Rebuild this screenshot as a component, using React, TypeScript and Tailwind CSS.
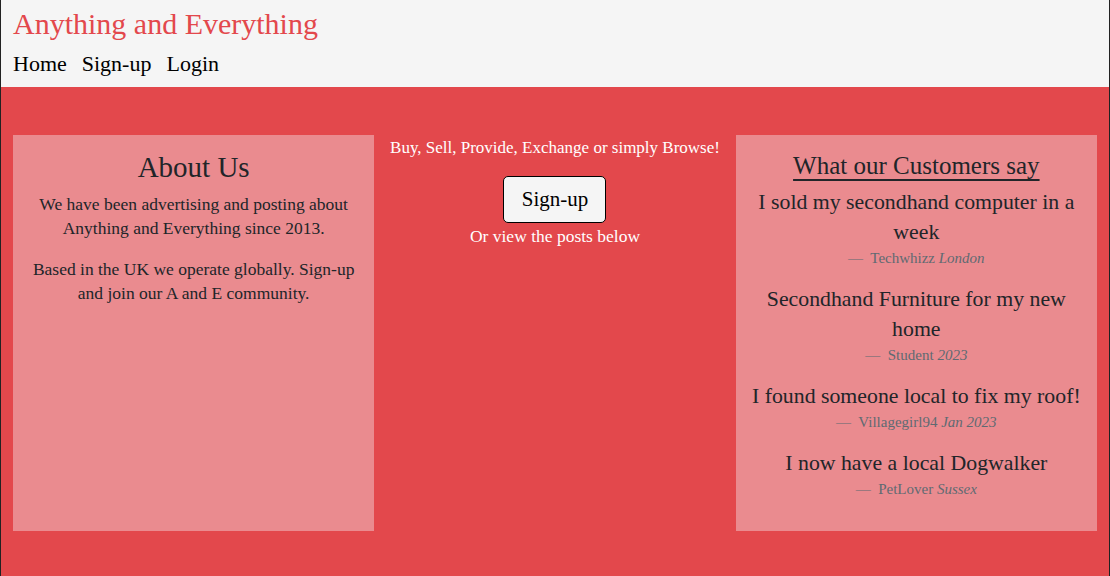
const quotes = [
  { text: "I sold my secondhand computer in a week", who: "Techwhizz", where: "London" },
  { text: "Secondhand Furniture for my new home", who: "Student", where: "2023" },
  { text: "I found someone local to fix my roof!", who: "Villagegirl94", where: "Jan 2023" },
  { text: "I now have a local Dogwalker", who: "PetLover", where: "Sussex" },
];

export default function App() {
  return (
    <div
      className="min-h-[576px] border-x border-[#222] bg-[#e3484c] text-[#212529]"
      style={{ fontFamily: '"Liberation Serif", serif' }}
    >
      <header className="h-[87px] bg-[#f5f5f5] px-3 pt-[5px]">
        <h1 className="text-[30px] leading-[38px] text-[#e3484c]">Anything and Everything</h1>
        <nav className="mt-[6px] flex gap-[15px] text-[22px] leading-[30px] text-black">
          <a>Home</a>
          <a>Sign-up</a>
          <a>Login</a>
        </nav>
      </header>

      <main className="grid grid-cols-3 px-3 pt-12 pb-[45px]">
        <section className="h-[396px] bg-[#ea8b8f] px-4 pt-[14px] text-center">
          <h2 className="mb-[7px] text-[29px] leading-[36px]">About Us</h2>
          <p className="mb-[17px] text-[17.5px] leading-6">
            We have been advertising and posting about Anything and Everything since 2013.
          </p>
          <p className="text-[17.5px] leading-6">
            Based in the UK we operate globally. Sign-up and join our A and E community.
          </p>
        </section>

        <section className="flex flex-col items-center pt-[1px] text-center text-white">
          <p className="text-[17px] leading-6">Buy, Sell, Provide, Exchange or simply Browse!</p>
          <button className="mt-4 h-[47px] w-[103px] rounded-[5px] border border-black bg-[#f5f5f5] text-[21px] text-black">
            Sign-up
          </button>
          <p className="mt-[1px] text-[17.5px] leading-6">Or view the posts below</p>
        </section>

        <section className="h-[396px] bg-[#ea8b8f] px-4 pt-[16px] text-center">
          <h3 className="mb-[6px] text-[25px] leading-[30px] underline underline-offset-[5px]">
            What our Customers say
          </h3>
          {quotes.map((q) => (
            <figure key={q.text} className="mb-[15px]">
              <blockquote className="text-[21.8px] leading-[30px]">{q.text}</blockquote>
              <figcaption className="text-[15px] leading-[22px] text-[#5f6a72]">
                —&nbsp; {q.who} <i>{q.where}</i>
              </figcaption>
            </figure>
          ))}
        </section>
      </main>
    </div>
  );
}
